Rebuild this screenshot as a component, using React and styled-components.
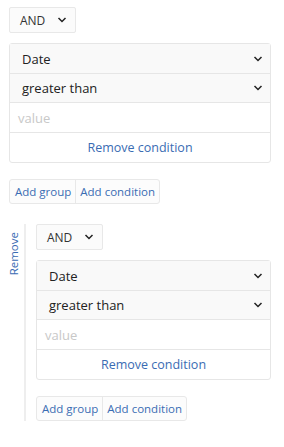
import React from "react";
import styled, { createGlobalStyle } from "styled-components";

const Global = createGlobalStyle`
  html, body { margin: 0; padding: 0; background: #fff; }
  body { font-family: "Open Sans", "Noto Sans", sans-serif; color: #333; }
  * { box-sizing: border-box; }
`;

const Page = styled.div`
  padding: 7px 13px 0 9px;
`;

const Group = styled.div`
  display: flex;
  flex-direction: column;
  align-items: stretch;
`;

const Combinator = styled.div`
  width: 67px;
  height: 26px;
  display: flex;
  align-items: center;
  justify-content: space-between;
  padding: 0 8px 0 10px;
  border: 1px solid #e8e8e8;
  border-radius: 2px;
  background: #fbfbfb;
  font-size: 12px;
`;

const ConditionBox = styled.div`
  margin-top: 10px;
  border: 1px solid #e6e6e6;
  border-radius: 3px;
  display: flex;
  flex-direction: column;
  background: #fff;
`;

const SelectRow = styled.div`
  height: ${(p) => p.$h || 30}px;
  display: flex;
  align-items: center;
  justify-content: space-between;
  padding: 0 7px 0 12px;
  background: #f9f9f9;
  border-bottom: 1px solid #e6e6e6;
  font-size: 13px;
  color: #222;
`;

const ValueRow = styled.div`
  height: 30px;
  display: flex;
  align-items: center;
  padding: 0 8px;
  border-bottom: 1px solid #e6e6e6;
  font-size: 13px;
  color: #c8c8c8;
`;

const RemoveRow = styled.div`
  height: 29px;
  display: flex;
  align-items: center;
  justify-content: center;
  font-size: 12.5px;
  color: #3a6cb3;
`;

const ButtonBar = styled.div`
  margin-top: ${(p) => p.$mt}px;
  display: flex;
  align-self: flex-start;
  border: 1px solid #e8e8e8;
  border-radius: 3px;
  background: #fcfcfc;
`;

const Btn = styled.div`
  height: 23px;
  display: flex;
  align-items: center;
  padding: 0 ${(p) => p.$pr}px 0 ${(p) => p.$pl}px;
  font-size: 11.5px;
  color: #3a6cb3;
  & + & { border-left: 1px solid #e8e8e8; }
`;

const Nested = styled.div`
  margin-top: 20px;
  display: flex;
  align-items: stretch;
`;

const RemoveCol = styled.div`
  width: 15px;
  display: flex;
  justify-content: center;
  align-items: flex-start;
`;

const RemoveVertical = styled.div`
  writing-mode: vertical-rl;
  transform: rotate(180deg);
  font-size: 11.5px;
  color: #3a6cb3;
  margin-top: 8px;
  padding-left: 6px;
`;

const NestedBody = styled.div`
  flex: 1;
  border-left: 2px solid #eeeeee;
  padding-left: 10px;
  display: flex;
  flex-direction: column;
`;

const Chevron = () => (
  <svg width="10" height="6" viewBox="0 0 10 6">
    <path d="M1.5 1 L5 4.5 L8.5 1" fill="none" stroke="#222" strokeWidth="1.5" />
  </svg>
);

function Condition() {
  return (
    <ConditionBox>
      <SelectRow $h={30}>
        <span>Date</span>
        <Chevron />
      </SelectRow>
      <SelectRow $h={29}>
        <span>greater than</span>
        <Chevron />
      </SelectRow>
      <ValueRow>value</ValueRow>
      <RemoveRow>Remove condition</RemoveRow>
    </ConditionBox>
  );
}

function Buttons({ mt }) {
  return (
    <ButtonBar $mt={mt}>
      <Btn $pl={5} $pr={4}>Add group</Btn>
      <Btn $pl={4} $pr={4}>Add condition</Btn>
    </ButtonBar>
  );
}

export default function App() {
  return (
    <>
      <Global />
      <Page>
        <Group>
          <Combinator>
            <span>AND</span>
            <Chevron />
          </Combinator>
          <Condition />
          <Buttons mt={16} />
        </Group>
        <Nested>
          <RemoveCol>
            <RemoveVertical>Remove</RemoveVertical>
          </RemoveCol>
          <NestedBody>
            <Combinator>
              <span>AND</span>
              <Chevron />
            </Combinator>
            <Condition />
            <Buttons mt={16} />
          </NestedBody>
        </Nested>
      </Page>
    </>
  );
}
